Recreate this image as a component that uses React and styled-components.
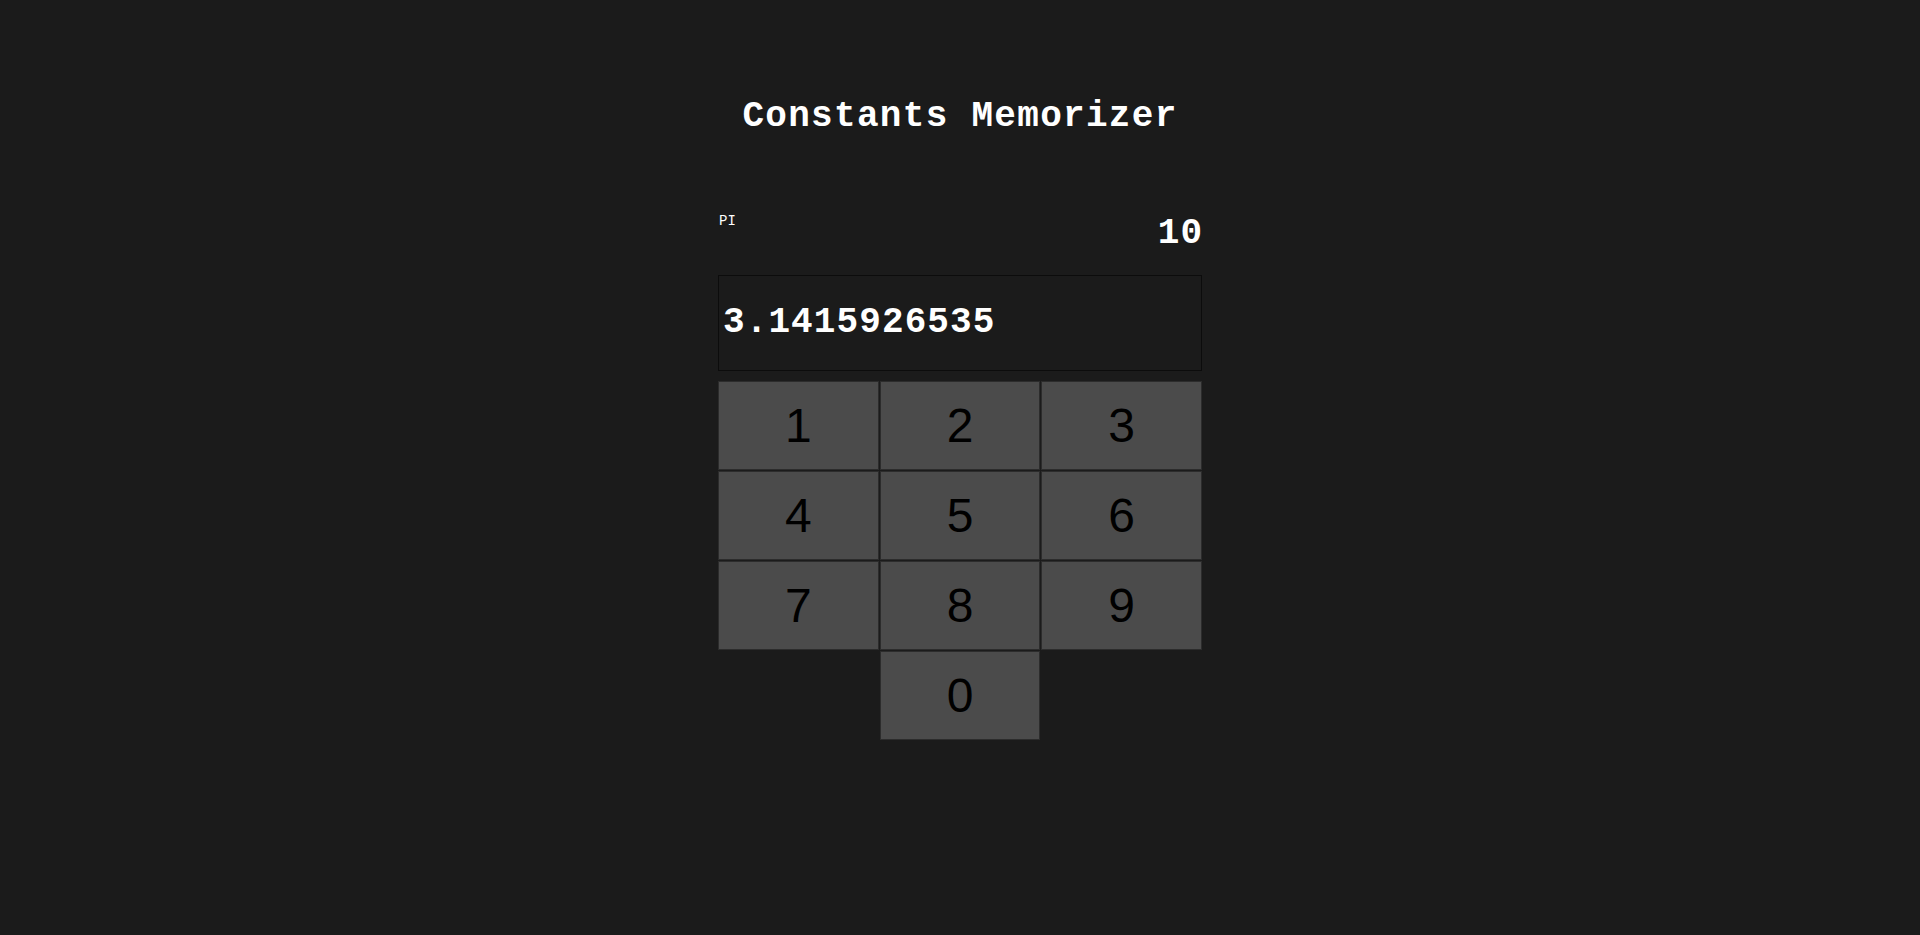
import React from 'react';
import styled, { createGlobalStyle } from 'styled-components';

const GlobalStyle = createGlobalStyle`
  html, body {
    margin: 0;
    padding: 0;
    background: #1b1b1b;
    min-height: 100%;
  }
  body {
    font-family: "Liberation Mono", "Courier New", monospace;
    color: #fff;
  }
`;

const Page = styled.div`
  min-height: 935px;
  display: flex;
  justify-content: center;
  background: #1b1b1b;
`;

const Wrapper = styled.div`
  width: 484px;
  padding-top: 97px;
  display: flex;
  flex-direction: column;
`;

const Title = styled.h1`
  margin: 0 0 77px;
  font-size: 36px;
  line-height: 40px;
  font-weight: bold;
  letter-spacing: 1.3px;
  text-align: center;
  white-space: nowrap;
`;

const InfoRow = styled.div`
  display: flex;
  justify-content: space-between;
  align-items: flex-start;
  height: 40px;
  margin-bottom: 21px;
`;

const ConstName = styled.span`
  font-size: 14px;
  line-height: 15px;
  padding-left: 1px;
`;

const DigitCount = styled.span`
  font-size: 36px;
  line-height: 40px;
  font-weight: bold;
  letter-spacing: 1px;
  margin-right: -1px;
`;

const Display = styled.div`
  box-sizing: border-box;
  height: 96px;
  border: 1px solid #0c0c0c;
  padding: 0 4px;
  display: flex;
  align-items: center;
  font-size: 36px;
  line-height: 40px;
  font-weight: bold;
  letter-spacing: 1.1px;
  margin-bottom: 10px;
`;

const Keypad = styled.div`
  display: grid;
  grid-template-columns: repeat(3, 1fr);
  grid-auto-rows: 89px;
  gap: 1px;
`;

const Key = styled.button`
  box-sizing: border-box;
  grid-column: ${p => p.col || 'auto'};
  border: 1px solid #2c2c2c;
  background: #4b4b4b;
  color: #000;
  font-family: "Liberation Sans", Arial, sans-serif;
  font-size: 48px;
  padding: 0;
  cursor: pointer;
`;

const digits = [1, 2, 3, 4, 5, 6, 7, 8, 9];

export default function App() {
  return (
    <Page>
      <GlobalStyle />
      <Wrapper>
        <Title>Constants Memorizer</Title>
        <InfoRow>
          <ConstName>PI</ConstName>
          <DigitCount>10</DigitCount>
        </InfoRow>
        <Display>3.1415926535</Display>
        <Keypad>
          {digits.map(d => <Key key={d}>{d}</Key>)}
          <Key col={2}>0</Key>
        </Keypad>
      </Wrapper>
    </Page>
  );
}
